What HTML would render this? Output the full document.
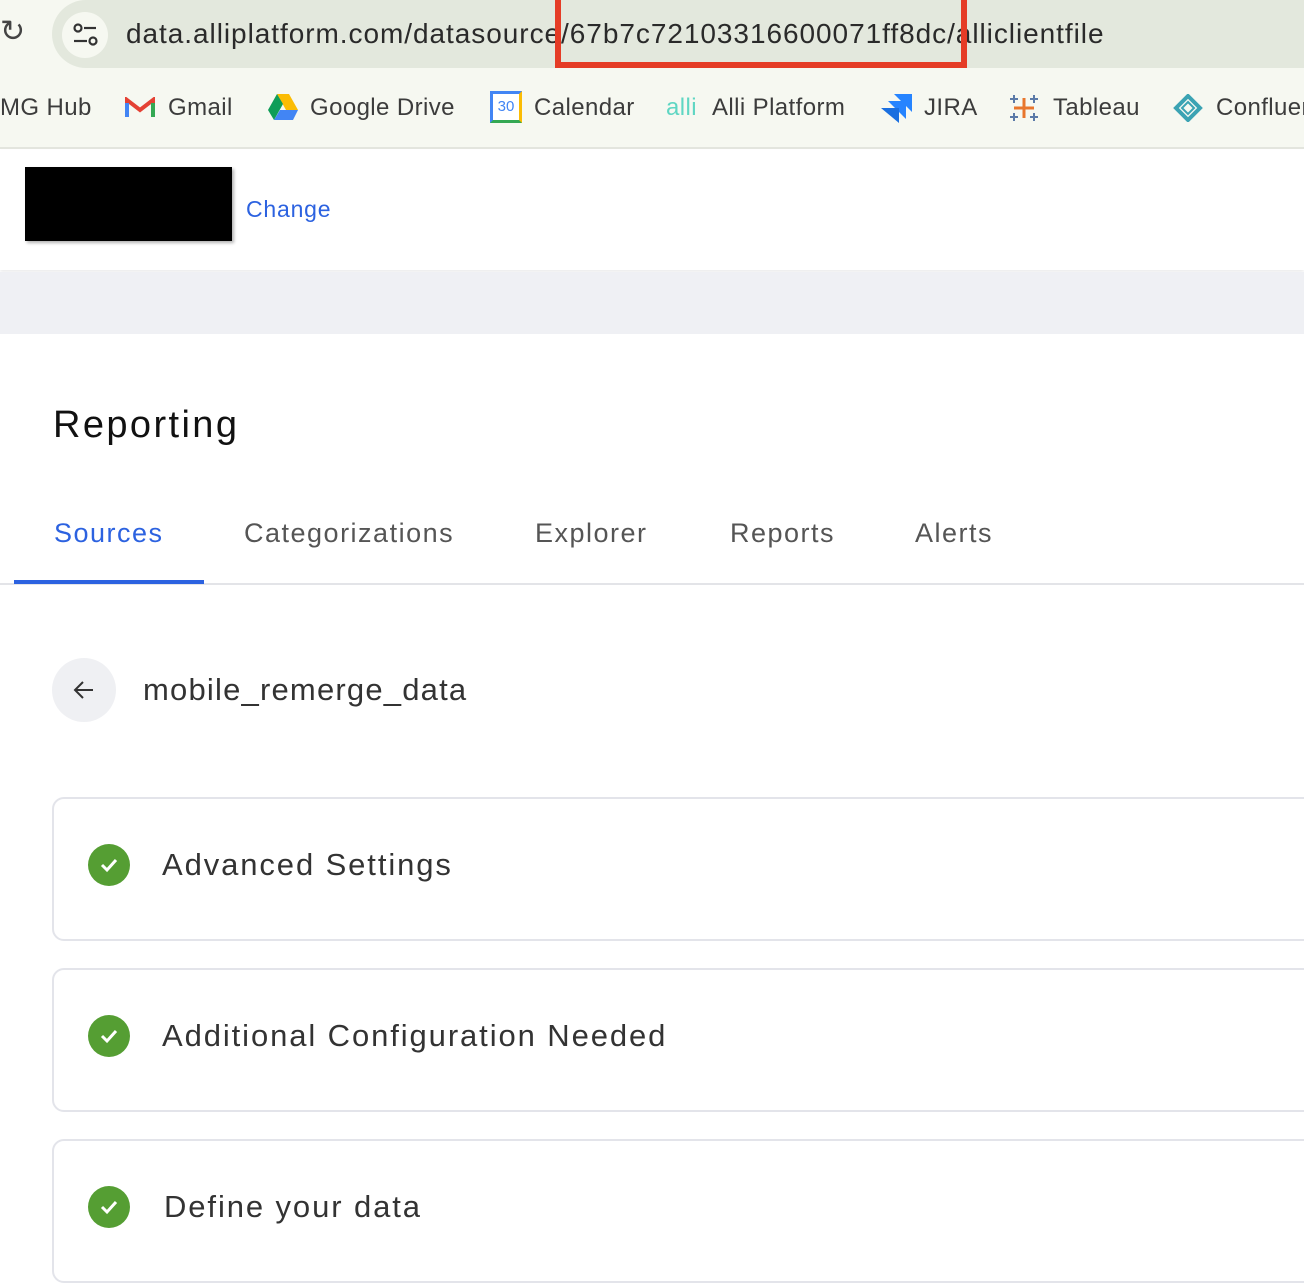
<!DOCTYPE html>
<html><head><meta charset="utf-8"><style>
*{margin:0;padding:0;box-sizing:border-box}
body{width:1304px;height:1282px;overflow:hidden;background:#fff;font-family:"Liberation Sans",sans-serif;position:relative;color:#222}
.abs{position:absolute}
#top{left:0;top:0;width:1304px;height:149px;background:#f6f8f1;border-bottom:2px solid #e3e5de}
#url{left:52px;top:0;width:1300px;height:68px;border-radius:34px;background:#e3e8dd}
.bm{position:absolute;top:94px;font-size:24px;color:#3c3c3c;white-space:nowrap;letter-spacing:.4px}
.tab{position:absolute;top:518px;font-size:27px;color:#555;letter-spacing:1.5px}
.card{position:absolute;left:52px;width:1300px;height:144px;border:2px solid #e3e4ea;border-radius:12px}
.chk{position:absolute;left:34px;top:45px;width:42px;height:42px;border-radius:50%;background:#559e33}
.ct{position:absolute;left:108px;top:48px;font-size:31px;color:#333;letter-spacing:1.9px;white-space:nowrap}
</style></head><body>
<div id="top" class="abs"></div>
<div id="url" class="abs"></div>
<div class="abs" style="left:0;top:14px;font-size:30px;color:#444">↻</div>
<div class="abs" style="left:62px;top:12px;width:46px;height:46px;border-radius:50%;background:#f6f8f1"></div>
<svg class="abs" style="left:72px;top:22px" width="28" height="26"><circle cx="6" cy="6" r="3.5" fill="none" stroke="#333" stroke-width="2.2"/><line x1="12" y1="6" x2="24" y2="6" stroke="#333" stroke-width="2.2"/><line x1="2" y1="19" x2="15" y2="19" stroke="#333" stroke-width="2.2"/><circle cx="21" cy="19" r="3.5" fill="none" stroke="#333" stroke-width="2.2"/></svg>
<div class="abs" style="left:126px;top:18px;font-size:28px;color:#2a2a2a;white-space:nowrap;letter-spacing:.95px">data.alliplatform.com/datasource/67b7c72103316600071ff8dc/alliclientfile</div>
<div class="abs" style="left:555px;top:-6px;width:412px;height:74px;border:6px solid #e53c26"></div>
<div class="bm" style="left:0">MG Hub</div>
<svg class="abs" style="left:125px;top:97px" width="30" height="22"><path d="M2 20V3l13 10L28 3v17" fill="none" stroke="#e44134" stroke-width="4"/><path d="M2 20V6" stroke="#4285f4" stroke-width="4"/><path d="M28 20V6" stroke="#34a853" stroke-width="4"/></svg>
<div class="bm" style="left:168px">Gmail</div>
<svg class="abs" style="left:267px;top:92px" width="32" height="30"><path d="M10 2h12l9 16H19z" fill="#fbbc04"/><path d="M10 2L1 18l6 10 9-16z" fill="#0f9d58"/><path d="M7 28h19l5-10H13z" fill="#4285f4"/></svg>
<div class="bm" style="left:310px">Google Drive</div>
<div class="abs" style="left:490px;top:91px;width:32px;height:32px;background:#fff;border:3px solid #4285f4;border-bottom-color:#34a853;border-right-color:#fbbc04;font-size:15px;color:#4285f4;text-align:center;line-height:26px">30</div>
<div class="bm" style="left:534px">Calendar</div>
<div class="bm" style="left:666px;color:#5fd6c3">alli</div>
<div class="bm" style="left:712px">Alli Platform</div>
<svg class="abs" style="left:880px;top:92px" width="34" height="32"><path d="M14 2h18v18z" fill="#2684ff"/><path d="M8 9h18v18z" fill="#2684ff"/><path d="M1 16h18v15z" fill="#1a6fe0"/></svg>
<div class="bm" style="left:924px">JIRA</div>
<svg class="abs" style="left:1008px;top:92px" width="32" height="32"><path d="M16 6v20M6 16h20" stroke="#e8762d" stroke-width="3"/><path d="M6 3v8M2 7h8M26 3v8M22 7h8M6 21v8M2 25h8M26 21v8M22 25h8" stroke="#5b7aa8" stroke-width="2"/></svg>
<div class="bm" style="left:1053px">Tableau</div>
<svg class="abs" style="left:1172px;top:94px" width="32" height="28"><path d="M16 2l12 12-12 12L4 14z" fill="none" stroke="#3ba3b3" stroke-width="4"/><path d="M16 8l6 6-6 6-6-6z" fill="none" stroke="#3ba3b3" stroke-width="2"/></svg>
<div class="bm" style="left:1216px">Confluence</div>

<div class="abs" style="left:0;top:150px;width:1304px;height:120px;background:#fff;box-shadow:0 2px 3px rgba(0,0,0,.08)"></div>
<div class="abs" style="left:25px;top:167px;width:207px;height:74px;background:#000;box-shadow:2px 2px 3px rgba(0,0,0,.3)"></div>
<div class="abs" style="left:246px;top:196px;font-size:23px;color:#2c62e0;letter-spacing:.8px">Change</div>
<div class="abs" style="left:0;top:272px;width:1304px;height:62px;background:#eff0f4"></div>

<div class="abs" style="left:53px;top:404px;font-size:38px;color:#111;letter-spacing:2.4px">Reporting</div>
<div class="tab" style="left:54px;color:#2c62e0">Sources</div>
<div class="tab" style="left:244px">Categorizations</div>
<div class="tab" style="left:535px">Explorer</div>
<div class="tab" style="left:730px">Reports</div>
<div class="tab" style="left:915px">Alerts</div>
<div class="abs" style="left:0;top:583px;width:1304px;height:2px;background:#e3e4e8"></div>
<div class="abs" style="left:14px;top:580px;width:190px;height:4px;background:#2c62e0"></div>

<div class="abs" style="left:52px;top:658px;width:64px;height:64px;border-radius:50%;background:#eff0f3"></div>
<svg class="abs" style="left:72px;top:678px" width="24" height="24"><path d="M21 12H3M11 4l-8 8 8 8" fill="none" stroke="#333" stroke-width="2"/></svg>
<div class="abs" style="left:143px;top:672px;font-size:31px;color:#333;letter-spacing:1.2px">mobile_remerge_data</div>

<div class="card" style="top:797px"><div class="chk"><svg width="42" height="42"><path d="M14 21l5 5 9-10" fill="none" stroke="#fff" stroke-width="3"/></svg></div><div class="ct">Advanced Settings</div></div>
<div class="card" style="top:968px"><div class="chk"><svg width="42" height="42"><path d="M14 21l5 5 9-10" fill="none" stroke="#fff" stroke-width="3"/></svg></div><div class="ct">Additional Configuration Needed</div></div>
<div class="card" style="top:1139px"><div class="chk"><svg width="42" height="42"><path d="M14 21l5 5 9-10" fill="none" stroke="#fff" stroke-width="3"/></svg></div><div class="ct" style="left:110px">Define your data</div></div>
</body></html>
